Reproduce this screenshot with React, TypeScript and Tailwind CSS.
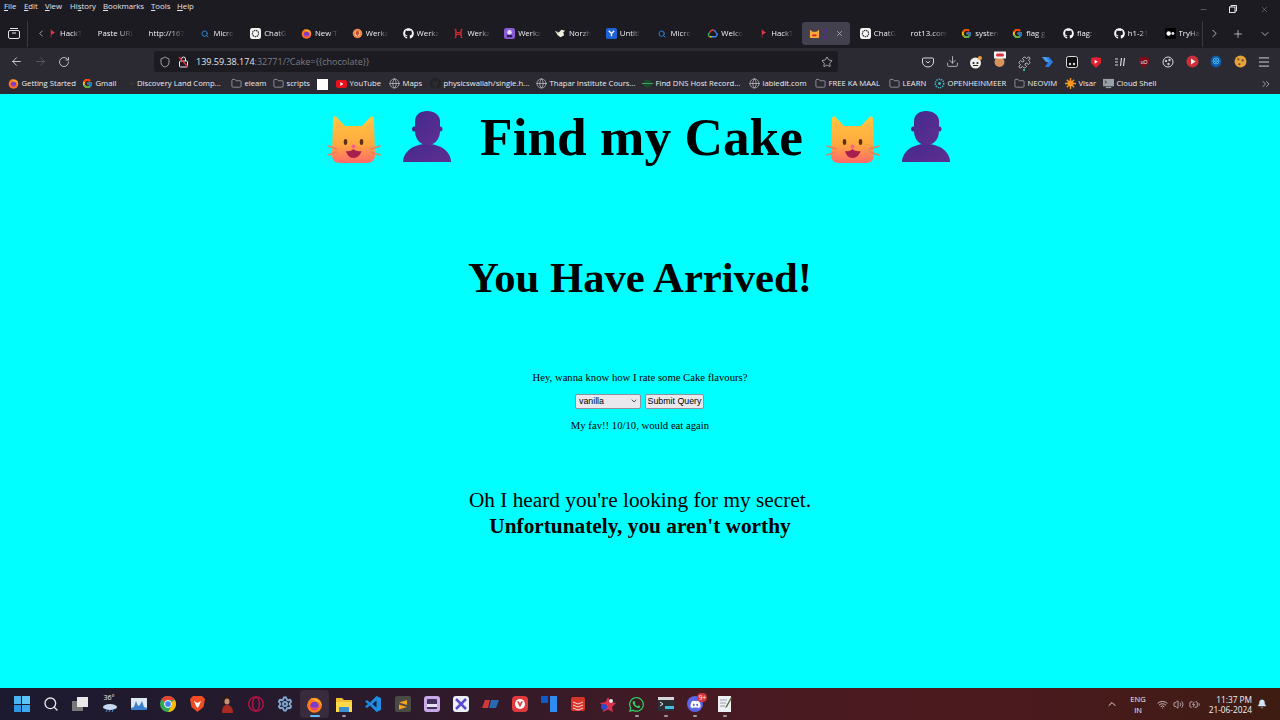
import React from "react";
import { ArrowLeft, ArrowRight, RotateCw, Shield, Star, Download, Menu, Folder, Globe, ChevronLeft, ChevronRight, ChevronDown, ChevronUp, ChevronsRight, Plus, X, Minus, Search, Bell, Wifi, Volume2, BatteryCharging, Puzzle, Settings } from "lucide-react";
import { FaGithub, FaWhatsapp, FaDiscord } from "react-icons/fa";
import { FcGoogle } from "react-icons/fc";

const Fx = ({ s = 11 }: { s?: number }) => (
  <svg width={s} height={s} viewBox="0 0 24 24" className="shrink-0">
    <circle cx="12" cy="13" r="10.5" fill="#ff7a1a" />
    <path d="M6 3c3 0 5 1 7 1 5 1 9 5 9 10-2-5-5-7-8-7z" fill="#ffbd2e" />
    <circle cx="12" cy="14" r="6" fill="#7a3bd0" />
    <path d="M5 14c1 5 6 6 9 5 3-1 4-3 4-5-2 3-8 4-13 0z" fill="#ff4f5e" />
  </svg>
);
const Gpt = () => (
  <svg width="11" height="11" viewBox="0 0 12 12" className="shrink-0">
    <rect width="12" height="12" rx="2.5" fill="#f4f4f4" />
    <circle cx="6" cy="6" r="3.4" fill="none" stroke="#333" strokeWidth="1.4" strokeDasharray="1.6 .7" />
  </svg>
);
const Mag = () => <Search size={8} strokeWidth={3} className="shrink-0 mx-[1.5px] text-[#2f7fd0]" />;
const WerkzFire = () => (
  <svg width="11" height="11" viewBox="0 0 12 12" className="shrink-0">
    <circle cx="6" cy="6" r="5.2" fill="#f08a4b" />
    <circle cx="6" cy="6" r="2.6" fill="#f6e7d6" />
    <path d="M5 3h2l1 3-2 3-2-3z" fill="#c8452a" />
  </svg>
);
const Hack = () => (
  <svg width="8" height="11" viewBox="0 0 8 11" className="shrink-0 mx-[1px]">
    <path d="M3 1v9" stroke="#7a2230" strokeWidth="1" />
    <path d="M3 2l4 2.500-4 2.500z" fill="#e03a4a" />
  </svg>
);
const RedH = () => (
  <svg width="11" height="11" viewBox="0 0 12 12" className="shrink-0">
    <path d="M2 1l2 4h4l2-4M2 11l2-4h4l2 4M3 1v10M9 1v10" stroke="#c5282f" strokeWidth="1.4" fill="none" />
  </svg>
);
const PurpleBot = () => (
  <svg width="11" height="11" viewBox="0 0 12 12" className="shrink-0">
    <rect width="12" height="12" rx="2.5" fill="#8a5cd6" />
    <circle cx="6" cy="4.6" r="2.4" fill="#e9def9" />
    <rect x="3" y="7.6" width="6" height="2.6" rx="1" fill="#2b1a50" />
  </svg>
);
const Bird = () => (
  <svg width="11" height="11" viewBox="0 0 12 12" className="shrink-0">
    <path d="M0 3l4 2 3-3 4 1-2 2 1 3-4 2-3-2z" fill="#e8f0e0" />
    <path d="M0 3l3 1 1 2z" fill="#5a9a3a" />
  </svg>
);
const Figma = () => (
  <svg width="11" height="11" viewBox="0 0 12 12" className="shrink-0">
    <rect width="12" height="12" rx="2" fill="#1c62d4" />
    <path d="M3 3l3 3 3-3M6 6v3" stroke="#fff" strokeWidth="1.6" fill="none" />
  </svg>
);
const GCloud = () => (
  <svg width="11" height="11" viewBox="0 0 12 12" className="shrink-0" fill="none" strokeWidth="1.6">
    <path d="M3 9.500A2.500 2.500 0 0 1 3 5" stroke="#34a853" />
    <path d="M3 5a3.400 3.400 0 0 1 5-2.400" stroke="#ea4335" />
    <path d="M8 2.600A3 3 0 0 1 9.400 5" stroke="#4285f4" />
    <path d="M9.400 5A2.300 2.300 0 0 1 9 9.500H3" stroke="#4285f4" />
    <path d="M5 9.500H3" stroke="#fbbc05" />
  </svg>
);
const Tryhack = () => (
  <svg width="11" height="11" viewBox="0 0 12 12" className="shrink-0">
    <rect width="12" height="12" rx="1" fill="#000" />
    <circle cx="4" cy="6" r="2.400" fill="#fff" />
    <circle cx="8.600" cy="6" r="1.600" fill="#ddd" />
  </svg>
);
const MiniCat = () => (
  <svg width="11" height="11" viewBox="0 0 12 12" className="shrink-0">
    <path d="M1 2l3 2h4l3-2v8a1 1 0 0 1-1 1H2a1 1 0 0 1-1-1z" fill="#f9a63a" />
    <rect x="3.400" y="7" width="5" height="2" rx="1" fill="#c22" />
  </svg>
);
const Gh = () => <FaGithub size={11} color="#fbfbfe" className="shrink-0" />;
const Gg = () => <FcGoogle size={11} className="shrink-0" />;

const tabs: { icon?: React.ReactNode; text: string; active?: boolean }[] = [
  { icon: <Hack />, text: "HackT" },
  { text: "Paste URL" },
  { text: "http://167" },
  { icon: <Mag />, text: "Micro" },
  { icon: <Gpt />, text: "ChatG" },
  { icon: <Fx />, text: "New T" },
  { icon: <WerkzFire />, text: "Werkz" },
  { icon: <Gh />, text: "Werkz" },
  { icon: <RedH />, text: "Werkz" },
  { icon: <PurpleBot />, text: "Werkz" },
  { icon: <Bird />, text: "Norzh" },
  { icon: <Figma />, text: "Untitl" },
  { icon: <Mag />, text: "Micro" },
  { icon: <GCloud />, text: "Welco" },
  { icon: <Hack />, text: "HackT" },
  { icon: <MiniCat />, text: "", active: true },
  { icon: <Gpt />, text: "ChatG" },
  { text: "rot13.com" },
  { icon: <Gg />, text: "systen" },
  { icon: <Gg />, text: "flag g" },
  { icon: <Gh />, text: "flag: i" },
  { icon: <Gh />, text: "h1-21" },
  { icon: <Tryhack />, text: "TryHa" },
];

const F = () => <Folder size={11} strokeWidth={1.3} className="shrink-0 text-[#d0d0d4]" />;
const G = () => <Globe size={11} strokeWidth={1.3} className="shrink-0 text-[#e0e0e4]" />;

const marks: { icon: React.ReactNode; text: string; w: string }[] = [
  { icon: <Fx />, text: "Getting Started", w: "w-[74px]" },
  { icon: <Gg />, text: "Gmail", w: "w-[47px]" },
  { icon: <span className="w-[5.500px] h-[3px] shrink-0 rounded-full bg-[#333]" />, text: "Discovery Land Comp...", w: "w-[102px]" },
  { icon: <F />, text: "eleam", w: "w-[42px]" },
  { icon: <F />, text: "scripts", w: "w-[44px]" },
  { icon: <span className="w-[11px] h-[11px] shrink-0 bg-white" />, text: "", w: "w-[19px]" },
  { icon: <svg width="11" height="8" viewBox="0 0 11 8" className="shrink-0"><rect width="11" height="8" rx="2" fill="#e8101a" /><path d="M4.400 2l3 2-3 2z" fill="#fff" /></svg>, text: "YouTube", w: "w-[53px]" },
  { icon: <G />, text: "Maps", w: "w-[41px]" },
  { icon: <FaGithub size={11} color="#222" className="shrink-0" />, text: "physicswallah/single.h...", w: "w-[106px]" },
  { icon: <G />, text: "Thapar Institute Cours...", w: "w-[106px]" },
  { icon: <svg width="11" height="9" viewBox="0 0 11 9" className="shrink-0"><circle cx="5.500" cy="4.500" r="4" fill="#1c4a2c" /><path d="M0 4.500h11" stroke="#4aa05a" /></svg>, text: "Find DNS Host Record...", w: "w-[107px]" },
  { icon: <G />, text: "labledit.com", w: "w-[66px]" },
  { icon: <F />, text: "FREE KA MAAL", w: "w-[74px]" },
  { icon: <F />, text: "LEARN", w: "w-[45px]" },
  { icon: <svg width="11" height="11" viewBox="0 0 12 12" className="shrink-0"><circle cx="6" cy="6" r="4.600" fill="none" stroke="#3fb8c8" strokeWidth="1.600" strokeDasharray="1.500 1" /><circle cx="6" cy="6" r="1.600" fill="#3fb8c8" /></svg>, text: "OPENHEINMEER", w: "w-[80px]" },
  { icon: <F />, text: "NEOVIM", w: "w-[51px]" },
  { icon: <svg width="11" height="11" viewBox="0 0 12 12" className="shrink-0"><circle cx="6" cy="6" r="3.200" fill="#f59a1e" /><path d="M6 0v12M0 6h12M2 2l8 8M10 2l-8 8" stroke="#f59a1e" strokeWidth="1.500" /></svg>, text: "Visar", w: "w-[38px]" },
  { icon: <svg width="11" height="11" viewBox="0 0 12 12" className="shrink-0"><rect y="1" width="12" height="8" fill="#9aa0a6" /><path d="M2 3l2 1.500L2 6" stroke="#333" fill="none" /><rect x="3" y="9.600" width="6" height="1.400" fill="#9aa0a6" /></svg>, text: "Cloud Shell", w: "w-[60px]" },
];

const Ext = ({ children }: { children: React.ReactNode }) => (
  <div className="w-[24px] h-[21px] flex items-center justify-center shrink-0">{children}</div>
);

const tools: React.ReactNode[] = [
  <svg key="a" width="12" height="12" viewBox="0 0 12 12" fill="none" stroke="#d8d8dc"><path d="M1.500 2h9a1 1 0 0 1 1 1v3a5.500 5 0 0 1-11 0V3a1 1 0 0 1 1-1z" /><path d="M3.800 5L6 7l2.200-2" /></svg>,
  <Download key="b" size={13} strokeWidth={1.4} className="text-[#d8d8dc]" />,
  <svg key="c" width="14" height="14" viewBox="0 0 14 14"><circle cx="6.500" cy="8" r="5.500" fill="#f0f0f0" /><circle cx="4.500" cy="8" r="1.100" fill="#222" /><circle cx="8.500" cy="8" r="1.100" fill="#222" /><path d="M4 10.500h5" stroke="#222" /><circle cx="11" cy="3" r="2" fill="#f0a030" /></svg>,
  <svg key="d" width="14" height="18" viewBox="0 0 14 18" className="-mt-[4px]"><circle cx="6.500" cy="11" r="5" fill="#d8945a" /><rect x="1" y="0.500" width="12" height="7" fill="#f4f4f4" /><rect x="3" y="2.500" width="8" height="3" rx="1.500" fill="#d83040" /></svg>,
  <div key="e" className="flex flex-col items-center mt-[3px]"><Puzzle size={13} strokeWidth={1.4} className="text-[#e8e8ec]" /><span className="w-[2px] h-[2px] rounded-full bg-[#3fe0a0]" /></div>,
  <svg key="f" width="12" height="12" viewBox="0 0 12 12"><path d="M3 1h4l4 5-4 5H3l3-5z" fill="#2a7ae2" /><path d="M0 1h4l4 5H4z" fill="#4aa0f0" /></svg>,
  <svg key="g" width="12" height="12" viewBox="0 0 12 12"><rect x=".5" y=".5" width="11" height="11" rx="2" fill="#111" stroke="#d8d8dc" /><circle cx="4" cy="8" r="1.200" fill="#d8d8dc" /><circle cx="8" cy="8" r="1.200" fill="#d8d8dc" /></svg>,
  <svg key="h" width="12" height="12" viewBox="0 0 12 12"><path d="M1 2l5-1 5 1v5l-5 5-5-5z" fill="#e01f30" /><path d="M4.600 3.800l3.200 2-3.200 2z" fill="#fff" /></svg>,
  <svg key="i" width="12" height="12" viewBox="0 0 12 12" stroke="#d8d8dc" strokeWidth="1.200" fill="none"><path d="M1 3h3M1 6h3M1 9h3M6.500 10l1-8M9.500 10l1-8" /></svg>,
  <svg key="j" width="12" height="12" viewBox="0 0 12 12"><path d="M1 2l5-1.500L11 2v5l-5 5-5-5z" fill="#7a0f18" /><text x="6" y="7.500" fontSize="5" textAnchor="middle" fill="#f0f0f0" fontFamily="Liberation Sans, sans-serif">uO</text></svg>,
  <svg key="k" width="12" height="12" viewBox="0 0 12 12" fill="none" stroke="#d8d8dc"><circle cx="6" cy="6" r="5" /><circle cx="4" cy="5" r=".8" fill="#d8d8dc" /><circle cx="7.500" cy="4" r=".8" fill="#d8d8dc" /><circle cx="6.500" cy="8" r=".8" fill="#d8d8dc" /></svg>,
  <svg key="l" width="13" height="13" viewBox="0 0 12 12"><circle cx="6" cy="6" r="5.600" fill="#c8303c" /><path d="M4.600 3.200l4.200 2.800-4.200 2.800z" fill="#f4f4f4" /></svg>,
  <svg key="m" width="12" height="13" viewBox="0 0 12 13" fill="none"><path d="M6 .5a5.500 6 0 0 1 5.500 6c0 3-2 5.500-5.500 6a5.500 6 0 0 1-5.500-6A5.500 6 0 0 1 6 .5z" fill="#0e5aa8" /><circle cx="6" cy="6" r="3" stroke="#4ab8e8" /><circle cx="6" cy="6" r="1.300" stroke="#4ab8e8" /></svg>,
  <svg key="n" width="13" height="13" viewBox="0 0 12 12"><circle cx="6" cy="6" r="5.500" fill="#e5a13a" /><circle cx="4" cy="4" r="1" fill="#7a4a1a" /><circle cx="8" cy="5" r="1" fill="#7a4a1a" /><circle cx="5" cy="8.500" r="1" fill="#7a4a1a" /></svg>,
  <Menu key="o" size={14} strokeWidth={1.5} className="text-[#e8e8ec]" />,
];

const Cat = ({ id }: { id: string }) => (
  <svg width="54" height="54" viewBox="0 0 54 54" className="shrink-0">
    <defs>
      <linearGradient id={id} x1="0" y1="0" x2="0" y2="1">
        <stop offset="0" stopColor="#ffc93f" />
        <stop offset="0.6" stopColor="#ffa83f" />
        <stop offset="1" stopColor="#ff6a6a" />
      </linearGradient>
    </defs>
    <path d="M6 8c0-3 2-3.500 3.500-2L18 15h17l8.500-9c1.500-1.500 3.500-1 3.500 2l1 36c0 5-3 8-8 8H13c-5 0-8-3-8-8z" fill={`url(#${id})`} />
    <path d="M9 10l7 8-7 6zM44 10l-7 8 7 6z" fill="#ffb347" opacity=".7" />
    <ellipse cx="18.500" cy="31" rx="1.800" ry="3" fill="#5b3218" />
    <ellipse cx="34.500" cy="31" rx="1.800" ry="3" fill="#5b3218" />
    <circle cx="26.500" cy="35.500" r="1.900" fill="#ff5c8a" />
    <path d="M19 40c3 .5 5.500 0 7.500-2 2 2 5 2.500 8 2-1 4-4 7-8 7s-6.500-3-7.500-7z" fill="#a81e4e" />
    <path d="M1 35l9 3M1 44l9-3M53 35l-9 3M53 44l-9-3" stroke="#e8805c" strokeWidth="1.500" strokeLinecap="round" />
  </svg>
);
const Person = ({ id }: { id: string }) => (
  <svg width="54" height="54" viewBox="0 0 54 54" className="shrink-0">
    <defs>
      <linearGradient id={id} x1="0" y1="0" x2="1" y2="1">
        <stop offset="0" stopColor="#45298e" />
        <stop offset="1" stopColor="#5f2f90" />
      </linearGradient>
    </defs>
    <path d="M3 51c0-10 10-18 24-18s24 8 24 18z" fill={`url(#${id})`} />
    <circle cx="14.500" cy="18" r="2.500" fill="#4a2488" />
    <circle cx="40" cy="18" r="2.500" fill="#5a2a8e" />
    <path d="M15 10c0-6 5-10 12-10s13 4 13 10v10c0 8-5 14-12.500 14S15 28 15 20z" fill={`url(#${id})`} />
  </svg>
);

const TB = ({ children, active, dot }: { children: React.ReactNode; active?: boolean; dot?: boolean }) => (
  <div className={active ? "relative w-[29.300px] h-[28px] flex items-center justify-center shrink-0 bg-[#ffffff14] rounded" : "relative w-[29.300px] h-[28px] flex items-center justify-center shrink-0"}>
    {children}
    {dot && <span className={active ? "absolute bottom-[1px] w-[10px] h-[2px] rounded bg-[#5fb8f0]" : "absolute bottom-[1px] w-[4px] h-[2px] rounded bg-[#9a9aa0]"} />}
  </div>
);

const taskbar: { el: React.ReactNode; active?: boolean; dot?: boolean }[] = [
  { el: <div className="grid grid-cols-2 gap-[1px] w-[16px] h-[16px]"><span className="bg-[#4ab4f0]" /><span className="bg-[#5cc6f6]" /><span className="bg-[#2f96e6]" /><span className="bg-[#3ea8ee]" /></div> },
  { el: <Search size={16} strokeWidth={2} className="text-[#e8e8ec]" /> },
  { el: <svg width="16" height="14" viewBox="0 0 16 14"><rect y="4" width="11" height="10" fill="#777" /><rect x="5" width="11" height="10" fill="#e8e8e8" /></svg> },
  { el: <div className="relative w-[18px] h-[18px]"><span className="absolute -top-[1px] left-[3px] text-[7px] leading-[8px] text-[#f0f0f0] font-['Open_Sans',sans-serif]">36°</span><svg width="18" height="18" viewBox="0 0 18 18"><ellipse cx="9" cy="12" rx="7" ry="3" fill="#c8d8f0" /><path d="M6 15l-1 2M9 15l-1 2M12 15l-1 2" stroke="#4a90e0" /></svg></div> },
  { el: <svg width="16" height="12" viewBox="0 0 16 12"><rect width="16" height="12" fill="#dce8f4" /><path d="M0 10l3-1 2-6 2 5 2-1 2-4 2 6 3 1v2H0z" fill="#3a7ed0" /></svg> },
  { el: <svg width="16" height="16" viewBox="0 0 16 16"><circle cx="8" cy="8" r="8" fill="#34a853" /><path d="M8 0a8 8 0 0 1 6.900 4H8a4 4 0 0 0-3.500 2L1.500 3A8 8 0 0 1 8 0z" fill="#ea4335" /><path d="M14.900 4A8 8 0 0 1 8 16l3.500-6a4 4 0 0 0 0-4z" fill="#fbbc05" /><circle cx="8" cy="8" r="3.500" fill="#4285f4" stroke="#fff" /></svg> },
  { el: <svg width="15" height="16" viewBox="0 0 15 16"><path d="M3 0h9l3 3-1.500 8L7.500 16 1.500 11 0 3z" fill="#f04d22" /><path d="M4 5l3.500 2L11 5 9 10l-1.500 2L6 10z" fill="#fff" /></svg> },
  { el: <svg width="16" height="18" viewBox="0 0 16 18"><circle cx="7" cy="5" r="4" fill="#2a1a18" /><ellipse cx="8" cy="6.500" rx="2.500" ry="3" fill="#c89070" /><path d="M3 18c0-6 2-8 5-8s6 2 6 8z" fill="#a82a22" /></svg> },
  { el: <svg width="16" height="16" viewBox="0 0 16 16" fill="none" stroke="#c8124a" strokeWidth="1.300"><circle cx="8" cy="8" r="7.200" /><ellipse cx="8" cy="8" rx="3.400" ry="6.400" /></svg> },
  { el: <Settings size={16} strokeWidth={3} className="text-[#7fa8d0]" /> },
  { el: <Fx s={17} />, active: true, dot: true },
  { el: <svg width="16" height="15" viewBox="0 0 16 15"><path d="M0 1h6l2 2h8v3H0z" fill="#f0c030" /><rect y="5" width="16" height="10" fill="#ffd84a" /><rect x="3" y="10" width="10" height="5" fill="#3a90d0" /></svg>, dot: true },
  { el: <svg width="16" height="16" viewBox="0 0 16 16"><path d="M11.500 0L16 2v12l-4.500 2L5 9.500 2 12 0 10.500 3 8 0 5.500 2 4l3 2.500z" fill="#1f8ce0" /><path d="M11.500 4.500L7.500 8l4 3.500z" fill="#1c1a30" /></svg> },
  { el: <div className="w-[16px] h-[16px] rounded-[2px] bg-[#4a4a44] flex items-center justify-center"><svg width="10" height="11" viewBox="0 0 10 11"><path d="M9 1L1 3.500v2L9 8M1 3.500L9 6v2l-8 2.500" fill="#f6a020" /></svg></div> },
  { el: <svg width="16" height="16" viewBox="0 0 16 16"><rect width="16" height="16" rx="3" fill="#c8a8e8" /><rect x="3" y="3" width="10" height="10" rx="1" fill="#40305a" /><rect x="3" y="8" width="10" height="3" fill="#e8e0f4" /></svg> },
  { el: <svg width="16" height="16" viewBox="0 0 16 16"><rect width="16" height="16" rx="3" fill="#eef0f8" /><path d="M3 3l10 10M13 3L3 13" stroke="#5a4ad0" strokeWidth="2.500" /></svg> },
  { el: <svg width="17" height="8" viewBox="0 0 17 8"><path d="M3 0h5L6 8H0z" fill="#d03a3a" /><path d="M9 0h8l-3 8H7z" fill="#2a6ab0" /></svg> },
  { el: <svg width="16" height="16" viewBox="0 0 16 16"><rect width="16" height="16" rx="4" fill="#e03a3e" /><circle cx="8" cy="8" r="5" fill="#fff" /><path d="M5 5.500h2l1 2.500 1-2.500h2L8 11.500z" fill="#e03a3e" /></svg> },
  { el: <svg width="16" height="16" viewBox="0 0 16 16"><rect width="7" height="7" fill="#0e5ac8" /><rect x="9" width="7" height="16" fill="#2f8cf0" /></svg> },
  { el: <svg width="14" height="14" viewBox="0 0 14 14"><rect width="14" height="14" rx="2" fill="#d8352a" /><path d="M2 5l5 2 5-2M2 8l5 2 5-2M2 11l5 2 5-2" stroke="#fff" fill="none" opacity=".8" /></svg> },
  { el: <svg width="16" height="15" viewBox="0 0 16 15"><path d="M8 0l2.500 5 5.500 1-4 4 1 5-5-2.500L3 15l1-5-4-4 5.500-1z" fill="#d8324a" /><circle cx="4" cy="10" r="3" fill="#2a4ad0" /><circle cx="11" cy="4" r="2" fill="#e8e8f0" /></svg> },
  { el: <FaWhatsapp size={17} color="#2fd366" />, dot: true },
  { el: <svg width="16" height="14" viewBox="0 0 16 14"><rect width="16" height="14" fill="#2a3038" /><rect width="16" height="3" fill="#d8d8dc" /><path d="M2 5l3 2-3 2" stroke="#f0f0f0" fill="none" /><rect x="7" y="9" width="9" height="3" fill="#3fc0e0" /></svg>, dot: true },
  {
    el: (
      <div className="relative w-[16px] h-[16px] rounded-full bg-[#5a66e8] flex items-center justify-center">
        <FaDiscord size={11} color="#fff" />
        <span className="absolute -top-[3px] -right-[4px] w-[10px] h-[9px] rounded-full bg-[#d8343c] text-white text-[6.500px] leading-[9px] text-center font-['Open_Sans',sans-serif]">9+</span>
      </div>
    ),
    dot: true,
  },
  { el: <svg width="14" height="16" viewBox="0 0 14 16"><rect width="13" height="16" fill="#eef0f4" /><path d="M2 4h7M2 7h6M2 10h5" stroke="#9aa0b0" /><path d="M13 1L8 10l-1 2 2-1 5-9z" fill="#5a6a3a" /></svg>, dot: true },
];

export default function App() {
  return (
    <div className="w-full h-screen flex flex-col overflow-hidden font-['Open_Sans','Noto_Sans',sans-serif]">
      {/* menu bar */}
      <div className="h-[14px] bg-[#1c1b22] flex items-center text-[7.800px] text-[#e4e4e8] relative shrink-0">
        <div className="flex pl-[4px]">
          <span className="w-[20px]"><u>F</u>ile</span>
          <span className="w-[21px]"><u>E</u>dit</span>
          <span className="w-[25px]"><u>V</u>iew</span>
          <span className="w-[33px]">Hi<u>s</u>tory</span>
          <span className="w-[48px]"><u>B</u>ookmarks</span>
          <span className="w-[26px]"><u>T</u>ools</span>
          <span><u>H</u>elp</span>
        </div>
        <div className="ml-auto flex items-center h-[14px] mt-[4px] text-[#b8b8bc]">
          <div className="w-[30px] flex justify-center"><Minus size={9} strokeWidth={1} /></div>
          <div className="w-[30px] flex justify-center">
            <svg width="8" height="8" viewBox="0 0 8 8" fill="none" stroke="#e4e4e8"><rect x=".5" y="2" width="5.500" height="5.500" /><path d="M2 2V.5h5.500V6H6" /></svg>
          </div>
          <div className="w-[32px] flex justify-center"><X size={9} strokeWidth={1} /></div>
        </div>
      </div>

      {/* tab bar */}
      <div className="h-[34px] pt-[5px] bg-[#1c1b22] flex items-center shrink-0 text-[#f4f4f8]">
        <div className="w-[28px] h-[26px] flex items-center justify-center border-r border-[#3a3a42] shrink-0">
          <svg width="12" height="11" viewBox="0 0 12 11" fill="none" stroke="#e4e4e8"><rect x=".5" y="2.500" width="11" height="8" rx="1.500" /><path d="M2 .5h8M4 5h4" /></svg>
        </div>
        <div className="w-[18px] flex justify-center shrink-0 pl-[8px]"><ChevronLeft size={13} strokeWidth={1.5} /></div>
        <div className="flex items-center w-[1157px] shrink-0">
          {tabs.map((t, i) => (
            <div
              key={i}
              className={
                t.active
                  ? "w-[48px] h-[23px] ml-[-6px] mr-[8.800px] pl-[7px] flex items-center rounded-[3px] bg-[#42414d] relative shrink-0"
                  : "w-[50.800px] pl-[1px] pr-[6px] flex items-center gap-[3px] overflow-hidden shrink-0"
              }
            >
              {t.icon}
              {t.active ? (
                <>
                  <svg width="6" height="11" viewBox="0 0 6 11" className="ml-[2px] opacity-60"><circle cx="3" cy="3" r="2.400" fill="#5a2d90" /><path d="M0 11c0-3 1-4 3-4s3 1 3 4z" fill="#5a2d90" /></svg>
                  <X size={9} strokeWidth={1.200} className="ml-auto mr-[6px]" />
                </>
              ) : (
                <span className="text-[7.800px] whitespace-nowrap [mask-image:linear-gradient(90deg,#000_55%,transparent)]">{t.text}</span>
              )}
            </div>
          ))}
        </div>
        <div className="h-[28px] flex-1 flex items-center">
          <div className="w-[1px] h-[26px] bg-[#3a3a42] shrink-0 -ml-[1px]" />
          <div className="w-[22px] flex justify-center ml-[0px]"><ChevronRight size={13} strokeWidth={1.300} /></div>
          <div className="w-[26px] flex justify-center"><Plus size={12} strokeWidth={1.300} /></div>
          <div className="w-[28px] flex justify-center"><ChevronDown size={12} strokeWidth={1.300} /></div>
        </div>
      </div>

      {/* nav bar */}
      <div className="h-[24px] pt-[3px] bg-[#2b2a33] flex items-center shrink-0 text-[#e8e8ec]">
        <div className="w-[28px] flex justify-center pl-[4px]"><ArrowLeft size={13} strokeWidth={1.500} /></div>
        <div className="w-[24px] flex justify-center"><ArrowRight size={13} strokeWidth={1.300} className="text-[#6a6a72]" /></div>
        <div className="w-[24px] flex justify-center"><RotateCw size={12} strokeWidth={1.500} /></div>
        <div className="ml-[78px] w-[684px] h-[21px] bg-[#1c1b22] rounded-[3px] flex items-center shrink-0">
          <Shield size={12} strokeWidth={1.300} className="ml-[5px]" />
          <svg width="11" height="12" viewBox="0 0 11 12" fill="none" className="ml-[7px]">
            <rect x="1.500" y="5" width="8" height="6" rx="1" stroke="#e8e8ec" />
            <path d="M3.500 5V3a2 2 0 0 1 4 0v2" stroke="#e8e8ec" />
            <path d="M1 1l9 10" stroke="#e8303c" strokeWidth="1.300" />
          </svg>
          <span className="ml-[7px] text-[9px] text-[#e4e4e8]">139.59.38.174<span className="text-[#7c7c84]">:32771/?Cake={"{{chocolate}}"}</span></span>
          <Star size={12} strokeWidth={1.300} className="ml-auto mr-[5px]" />
        </div>
        <div className="ml-[78px] flex">
          {tools.map((t, i) => (
            <Ext key={i}>{t}</Ext>
          ))}
        </div>
      </div>

      {/* bookmarks */}
      <div className="h-[22px] pt-[2px] bg-[#2b2a33] flex items-center shrink-0 pl-[8px] text-[7.700px] text-[#ececf0]">
        {marks.map((m, i) => (
          <div key={i} className={"flex items-center gap-[2.500px] overflow-hidden shrink-0 whitespace-nowrap " + m.w}>
            {m.icon}
            {m.text && <span>{m.text}</span>}
          </div>
        ))}
        <ChevronsRight size={12} strokeWidth={1.200} className="ml-auto mr-[8px]" />
      </div>

      {/* page */}
      <main className="flex-1 bg-[#00ffff] flex flex-col items-center text-black font-['Liberation_Serif',serif]">
        <h1 className="mt-[17px] flex items-center h-[54px] text-[53.300px] font-bold leading-[54px]">
          <Cat id="cat1" />
          <span className="ml-[19px]"><Person id="p1" /></span>
          <span className="ml-[26px] mr-[23px]">Find my Cake</span>
          <Cat id="cat2" />
          <span className="ml-[19px]"><Person id="p2" /></span>
        </h1>
        <h2 className="mt-[86px] text-[42.700px] font-bold leading-[54px]">You Have Arrived!</h2>
        <p className="mt-[65px] text-[10.700px] leading-[14px]">Hey, wanna know how I rate some Cake flavours?</p>
        <form className="mt-[9px] -ml-[1px] flex items-center gap-[4px] h-[16px] font-['Liberation_Sans',sans-serif]">
          <div className="relative">
            <select defaultValue="vanilla" className="appearance-none w-[66px] h-[15px] pl-[3px] bg-[#e9e9ed] border border-[#8f8f9d] rounded-[2px] text-[8.800px] leading-[13px] text-black block">
              <option value="vanilla">vanilla</option>
              <option value="chocolate">chocolate</option>
              <option value="strawberry">strawberry</option>
            </select>
            <ChevronDown size={8} strokeWidth={2} className="absolute right-[3px] top-[3.500px] pointer-events-none" />
          </div>
          <button type="button" className="w-[59px] h-[15px] bg-[#e9e9ed] border border-[#8f8f9d] rounded-[2px] text-[8.800px] leading-[13px] text-black">Submit Query</button>
        </form>
        <p className="mt-[9px] text-[10.700px] leading-[14px]">My fav!! 10/10, would eat again</p>
        <p className="mt-[55px] text-[21.300px] leading-[26px]">Oh I heard you're looking for my secret.</p>
        <p className="text-[21.300px] font-bold leading-[26px]">Unfortunately, you aren't worthy</p>
      </main>

      {/* taskbar */}
      <div className="h-[32px] shrink-0 flex items-center bg-[linear-gradient(90deg,#1c1a30_0%,#2a1a2c_30%,#4a1a22_60%,#4a1a1e_80%,#3e1c12_100%)] pl-[7px]">
        {taskbar.map((t, i) => (
          <TB key={i} active={t.active} dot={t.dot}>{t.el}</TB>
        ))}
        <div className="ml-auto flex items-center text-[#f0f0f4]">
          <ChevronUp size={12} strokeWidth={1.800} />
          <div className="w-[28px] ml-[6px] mt-[1px] flex flex-col items-center text-[7.500px] leading-[11px]"><span>ENG</span><span>IN</span></div>
          <Wifi size={11} strokeWidth={1.600} className="ml-[5px]" />
          <Volume2 size={11} strokeWidth={1.400} className="ml-[5px]" />
          <BatteryCharging size={11} strokeWidth={1.400} className="ml-[5px]" />
          <div className="w-[46px] ml-[6px] mt-[1px] flex flex-col items-end text-[8.300px] leading-[10px]"><span>11:37 PM</span><span>21-06-2024</span></div>
          <Bell size={10} fill="#cfe6fa" strokeWidth={1} className="ml-[5px] mr-[13px] text-[#cfe6fa]" />
        </div>
      </div>
    </div>
  );
}
